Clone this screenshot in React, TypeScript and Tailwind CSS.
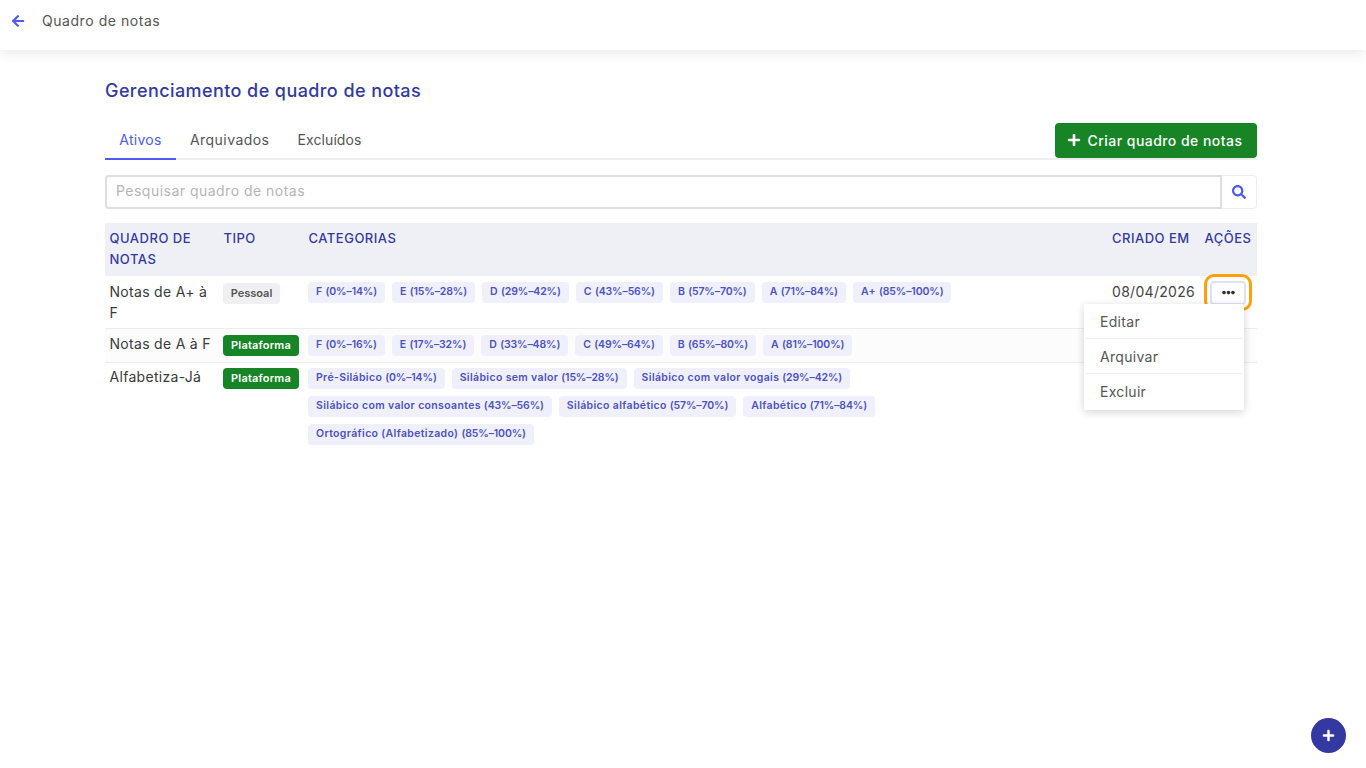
import { FaArrowLeft, FaEllipsisH, FaPlus, FaSearch } from "react-icons/fa";

const rows = [
  {
    name: "Notas de A+ à F",
    type: "Pessoal",
    date: "08/04/2026",
    namePad: "pt-[5px]",
    badgePad: "pt-[7px]",
    catPad: "pt-[6px]",
    cats: [
      ["F ", "(0%–14%)"],
      ["E ", "(15%–28%)"],
      ["D ", "(29%–42%)"],
      ["C ", "(43%–56%)"],
      ["B ", "(57%–70%)"],
      ["A ", "(71%–84%)"],
      ["A+ ", "(85%–100%)"],
    ],
  },
  {
    name: "Notas de A à F",
    type: "Plataforma",
    date: "",
    namePad: "pt-[4px]",
    badgePad: "pt-[6px]",
    catPad: "pt-[6px]",
    cats: [
      ["F ", "(0%–16%)"],
      ["E ", "(17%–32%)"],
      ["D ", "(33%–48%)"],
      ["C ", "(49%–64%)"],
      ["B ", "(65%–80%)"],
      ["A ", "(81%–100%)"],
    ],
  },
  {
    name: "Alfabetiza-Já",
    type: "Plataforma",
    date: "",
    namePad: "pt-[3px]",
    badgePad: "pt-[5px]",
    catPad: "pt-[5px]",
    cats: [
      ["Pré-Silábico ", "(0%–14%)"],
      ["Silábico sem valor ", "(15%–28%)"],
      ["Silábico com valor vogais ", "(29%–42%)"],
      ["Silábico com valor consoantes ", "(43%–56%)"],
      ["Silábico alfabético ", "(57%–70%)"],
      ["Alfabético ", "(71%–84%)"],
      ["Ortográfico (Alfabetizado) ", "(85%–100%)"],
    ],
  },
];

export default function App() {
  return (
    <div className="relative min-h-[768px] bg-white font-['Inter','Liberation_Sans',sans-serif] text-[#3a3a3a]">
      <header className="flex h-[50px] items-center bg-white pl-[11px] shadow-[0_2px_12px_rgba(60,60,90,0.12)]">
        <FaArrowLeft className="mb-[8px] text-[14px] text-[#4f5bf0]" />
        <span className="mb-[9px] ml-[17px] text-[14px] tracking-[0.55px] text-[#555]">Quadro de notas</span>
      </header>

      <main className="ml-[105px] w-[1152px]">
        <h1 className="mt-[30px] text-[18px] leading-[22px] font-medium tracking-[0.42px] text-[#3339a0]">
          Gerenciamento de quadro de notas
        </h1>

        <div className="mt-[21px] flex h-[37px] items-start justify-between border-b-2 border-[#eeeeee]">
          <div className="flex">
            <span className="h-[37px] w-[71px] border-b-2 border-[#4f5bf0] pt-[8px] text-center text-[14px] leading-[18px] tracking-[0.3px] text-[#4f5bf0]">
              Ativos
            </span>
            <span className="ml-[14px] pt-[8px] text-[14px] leading-[18px] tracking-[0.45px] text-[#555]">Arquivados</span>
            <span className="ml-[28px] pt-[8px] text-[14px] leading-[18px] tracking-[0.1px] text-[#555]">Excluídos</span>
          </div>
          <button className="flex h-[35px] w-[202px] items-center justify-center gap-[7px] rounded-[4px] bg-[#178526] pr-[3px] pb-[1px] text-[14px] font-medium tracking-[0.45px] text-white">
            <FaPlus className="text-[14px]" />
            Criar quadro de notas
          </button>
        </div>

        <div className="mt-[15px] flex h-[34px]">
          <div className="flex flex-1 items-center rounded-l-[4px] border-2 border-[#dedede] pb-[3px] pl-[9px] text-[14px] tracking-[0.48px] text-[#b5b5b5]">
            Pesquisar quadro de notas
          </div>
          <div className="flex w-[35px] items-center justify-center rounded-r-[4px] border border-l-0 border-[#eeeeee]">
            <FaSearch className="text-[14px] text-[#4f5bf0]" />
          </div>
        </div>

        <table className="mt-[14px] w-[1152px] table-fixed border-collapse text-left">
          <colgroup>
            <col className="w-[114px]" />
            <col className="w-[85px]" />
            <col className="w-[803px]" />
            <col className="w-[93px]" />
            <col className="w-[57px]" />
          </colgroup>
          <thead>
            <tr className="h-[53px] bg-[#eff0f5] text-[13px] leading-[21px] tracking-[0.5px] text-[#3339a0]">
              <th className="px-[4.5px] pt-[5px] align-top font-medium">QUADRO DE NOTAS</th>
              <th className="px-[4.5px] pt-[5px] align-top font-medium">TIPO</th>
              <th className="px-[4.5px] pt-[5px] align-top font-medium">CATEGORIAS</th>
              <th className="px-[5px] pt-[5px] align-top font-medium whitespace-nowrap">CRIADO EM</th>
              <th className="px-[4.5px] pt-[5px] align-top font-medium">AÇÕES</th>
            </tr>
          </thead>
          <tbody>
            {rows.map((r, i) => (
              <tr
                key={r.name}
                className={`${i < 2 ? "border-b border-[#ececec]" : ""} ${i === 1 ? "bg-[#fcfcfc]" : "bg-white"}`}
              >
                <td className={`px-[4.5px] pb-[5px] align-top text-[14px] leading-[21px] tracking-[0.3px] ${r.namePad}`}>
                  {r.name}
                </td>
                <td className={`px-[4px] pb-[5px] align-top ${r.badgePad}`}>
                  <span
                    className={`block h-[21px] rounded-[4px] text-center text-[11px] leading-[21px] font-semibold ${
                      r.type === "Pessoal"
                        ? "w-[57px] bg-[#f0f0f3] text-[#555]"
                        : "w-[76px] bg-[#178526] tracking-[0.2px] text-white"
                    }`}
                  >
                    {r.type}
                  </span>
                </td>
                <td className={`pr-[40px] pb-[6px] pl-[4px] align-top ${r.catPad}`}>
                  <div className="flex flex-wrap gap-[7px]">
                    {r.cats.map(([label, range]) => (
                      <span
                        key={label + range}
                        className="h-[21px] rounded-[4px] bg-[#eff0fb] px-[8px] text-[10.5px] leading-[19px] font-semibold tracking-[0.35px] whitespace-nowrap text-[#4d52c2]"
                      >
                        {label}
                        <span className="tracking-[-0.13px]">{range}</span>
                      </span>
                    ))}
                  </div>
                </td>
                <td className="px-[5px] pt-[5px] align-top text-[14px] leading-[21px] tracking-[0.3px] text-[#444]">{r.date}</td>
                <td className="relative align-top">
                  {i === 0 && (
                    <div className="absolute top-[-2px] left-[4px] flex h-[37px] w-[48px] items-center justify-center rounded-[10px] border-[3px] border-[#ff9f0a] bg-white">
                      <div className="flex h-[24px] w-[36px] items-center justify-center rounded-[4px] border-2 border-[#dfe1fb] bg-white">
                        <FaEllipsisH className="text-[13px] text-[#333]" />
                      </div>
                    </div>
                  )}
                </td>
              </tr>
            ))}
          </tbody>
        </table>
      </main>

      <div className="absolute top-[304px] left-[1084px] z-10 w-[160px] rounded-[2px] bg-white px-[2px] text-[14px] text-[#555] shadow-[0_2px_8px_rgba(0,0,0,0.18)]">
        <div className="h-[35px] border-b border-[#f0f0f0] pl-[14px] leading-[35px] tracking-[0.3px]">Editar</div>
        <div className="h-[35px] border-b border-[#f0f0f0] pl-[14px] leading-[35px] tracking-[0.3px]">Arquivar</div>
        <div className="h-[36px] pl-[14px] leading-[35px] tracking-[0.3px]">Excluir</div>
      </div>

      <button className="fixed right-[20px] bottom-[15px] flex h-[35px] w-[35px] items-center justify-center rounded-full bg-[#3339a0] text-white">
        <FaPlus className="text-[13px]" />
      </button>
    </div>
  );
}
